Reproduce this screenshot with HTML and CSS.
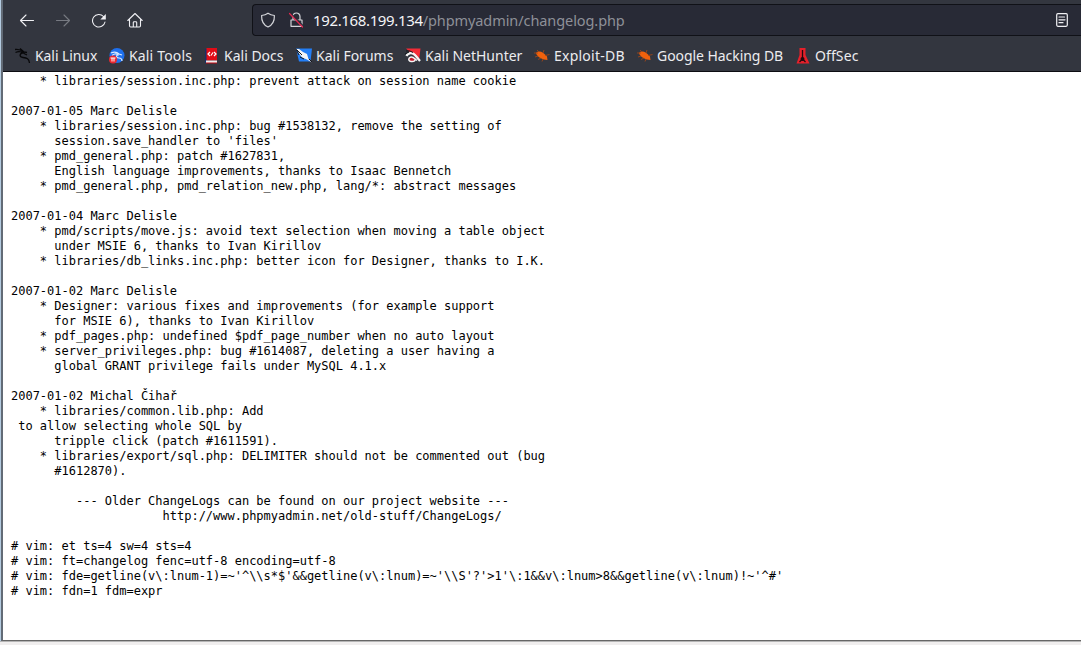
FILE: index.html
```html
<!DOCTYPE html>
<html lang="en">
<head>
<meta charset="utf-8">
<title>phpMyAdmin ChangeLog</title>
<link rel="stylesheet" href="styles.css">
</head>
<body>
<div class="frame">
<div class="window">
<header class="chrome">
  <nav class="toolbar">
    <div class="buttons">
      <svg class="nav-icon" viewBox="0 0 16 16"><path d="M14.500 8.500H1.500M7 3 1.500 8.500 7 14"/></svg>
      <svg class="nav-icon disabled" viewBox="0 0 16 16"><path d="M1.500 8.500h13M9 3l5.500 5.500L9 14"/></svg>
      <svg class="nav-icon" viewBox="0 0 16 16"><path d="M14 10A6.300 6.300 0 1 1 12.500 4.500"/><path class="solid" d="M14.800 2v5.500H9.300z"/></svg>
      <svg class="nav-icon" viewBox="0 0 16 16"><path d="M.8 8.500 8 1.500l7.200 7M2.500 7.500v6.300q0 1.200 1.200 1.200h8.600q1.200 0 1.200-1.200V7.500M6.300 15v-4.500q0-.8.8-.8h1.800q.8 0 .8.8V15"/></svg>
    </div>
    <div class="address">
      <svg class="addr-icon" viewBox="0 0 16 16"><path d="M8 1.200C10 2.600 12 3.200 14.400 3.500 14.600 9 12.500 13 8 15 3.500 13 1.400 9 1.600 3.500 4 3.200 6 2.600 8 1.200z"/></svg>
      <svg class="addr-icon lock" viewBox="0 0 16 16"><path d="M5 8V4.500a3.500 3.500 0 0 1 7 0V8M3 8h11v6.300H3z"/><path class="cover" d="M2.500 1 16 14.500"/><path class="slash" d="M1.500 1.500 14.500 15"/></svg>
      <span class="url">192.168.199.134<span class="path">/phpmyadmin/changelog.php</span></span>
      <svg class="addr-icon reader" viewBox="0 0 16 16"><rect x="2.700" y="1.700" width="10.600" height="12.600" rx="1.200"/><path d="M5 5h5.500M5 7.800h6M5 10.700h4"/></svg>
    </div>
  </nav>
  <nav class="bookmarks">
    <span class="bm linux"><svg viewBox="0 0 16 16"><path class="dragon" d="M0 1.500C4 .5 6 2 9 4M.5 4.500C5 2.500 7 4 9.500 5.500M5 .5l4 3.500 3 .5M9 4.500C4 5 4 9 8 9.500s6 1 6.500 5.500M9 5.500l3 1.500"/></svg>Kali Linux</span>
    <span class="bm tools"><svg viewBox="0 0 16 16"><circle cx="8" cy="7.500" r="7.500" fill="#1e70ee"/><path d="M2 5c4-2 6-1 8 1l3 1M3 7.500C6 5 8 6 9 7c-3 1-1 3 1 3s3 1 3 3" fill="none" stroke="#d7e8ff" stroke-width="1.200"/><circle cx="4" cy="11.500" r="4" fill="#e92830"/><path d="M1.500 10h5M3 10v3.500M5 10v3.500" stroke="#fff"/></svg>Kali Tools</span>
    <span class="bm docs"><svg viewBox="0 0 16 16"><path d="M1 1h2v14H1z" fill="#17306b"/><path d="M2.500 0H13v12.500H2.500z" fill="#e00c17"/><path d="M2 12.500h11V15H2z" fill="#eee"/><path d="M2 14.500h11v1H2z" fill="#c70812"/><path d="M6 4 4 6l2 2M10 4l2 2-2 2M9 4.500l-2 3" stroke="#fff" stroke-width="1.200" fill="none"/></svg>Kali Docs</span>
    <span class="bm forums"><svg viewBox="0 0 16 16"><path d="M0 .5h16l-1.500 13H3z" fill="#237ef5"/><path d="M0 1h3l4 3 4 2 1.500 5 3.500 3.500-5-3-5-2-3-4z" fill="#f5f5f5"/><path d="M1 2l5 5M4 9l4 2M0 1l3 6M13 11l3 3" stroke="#15171d" stroke-width="1"/></svg>Kali Forums</span>
    <span class="bm nethunter"><svg viewBox="0 0 16 16"><path d="M1 .5h14.500l-1.500 12L8 7z" fill="#f42b36"/><path d="M1.500 8C3 4.500 8 4 10.500 7.500L15 13" fill="none" stroke="#f5f5f5" stroke-width="2.200"/><path d="M12 12.500 8 9.500C4 7.500 2 13 6 13.500c3 .5 5-1 4-3" fill="#c71929" stroke="#f5f5f5" stroke-width="1.500"/><path d="M1 3q4-1 7 1.500M0 6l4-2" stroke="#15171d" fill="none"/></svg>Kali NetHunter</span>
    <span class="bm exploit"><svg viewBox="0 0 16 16"><path d="M2 5C5 2 9 4 13 8.500l.5 3.500C8.500 12 3 9 2 5z" fill="#f1610c"/><path d="M0 5h4M5 4 3 2M9 5l1-3M11 7.500l4.500-1M4 8l-3 1M7 10l-3 1.500M9 11l-1 2.500" stroke="#a94613" stroke-width=".8"/></svg>Exploit-DB</span>
    <span class="bm google"><svg viewBox="0 0 16 16"><path d="M2 5C5 2 9 4 13 8.500l.5 3.500C8.500 12 3 9 2 5z" fill="#f1610c"/><path d="M0 5h4M5 4 3 2M9 5l1-3M11 7.500l4.500-1M4 8l-3 1M7 10l-3 1.500M9 11l-1 2.500" stroke="#a94613" stroke-width=".8"/></svg>Google Hacking DB</span>
    <span class="bm offsec"><svg viewBox="0 0 16 16"><path d="M4.500 0h6v7l4 8.500h-13l3-8.500z" fill="#e5202a"/><path d="M7.500 2v11M7.500 11l-3 3M7.500 11l3 3" stroke="#24090e" stroke-width="1.300"/><circle cx="7.500" cy="11" r="2" fill="#24090e"/></svg>OffSec</span>
  </nav>
</header>
<pre class="log">    * libraries/session.inc.php: prevent attack on session name cookie

2007-01-05 Marc Delisle
    * libraries/session.inc.php: bug #1538132, remove the setting of
      session.save_handler to 'files'
    * pmd_general.php: patch #1627831,
      English language improvements, thanks to Isaac Bennetch
    * pmd_general.php, pmd_relation_new.php, lang/*: abstract messages

2007-01-04 Marc Delisle
    * pmd/scripts/move.js: avoid text selection when moving a table object
      under MSIE 6, thanks to Ivan Kirillov
    * libraries/db_links.inc.php: better icon for Designer, thanks to I.K.

2007-01-02 Marc Delisle
    * Designer: various fixes and improvements (for example support
      for MSIE 6), thanks to Ivan Kirillov
    * pdf_pages.php: undefined $pdf_page_number when no auto layout
    * server_privileges.php: bug #1614087, deleting a user having a
      global GRANT privilege fails under MySQL 4.1.x

2007-01-02 Michal Čihař
    * libraries/common.lib.php: Add
 to allow selecting whole SQL by
      tripple click (patch #1611591).
    * libraries/export/sql.php: DELIMITER should not be commented out (bug
      #1612870).

         --- Older ChangeLogs can be found on our project website ---
                     http://www.phpmyadmin.net/old-stuff/ChangeLogs/

# vim: et ts=4 sw=4 sts=4
# vim: ft=changelog fenc=utf-8 encoding=utf-8
# vim: fde=getline(v\:lnum-1)=~'^\\s*$'&amp;&amp;getline(v\:lnum)=~'\\S'?'&gt;1'\:1&amp;&amp;v\:lnum&gt;8&amp;&amp;getline(v\:lnum)!~'^#'
# vim: fdn=1 fdm=expr
</pre>
</div>
</div>
</body>
</html>
```
FILE: styles.css
```css
* { box-sizing: border-box; }
body { margin: 0; background: #f0eeee; overflow: hidden; }
.frame { height: 642px; padding-left: 1px; background: #b4cbe0; border-bottom: 1px solid #b5b5b5; }
.window { height: 641px; display: flex; flex-direction: column; border-left: 2px solid #626b76; border-bottom: 1px solid #666; background: #fff; }
.chrome { height: 72px; flex: none; background: #33363f; border-bottom: 1px solid #0c0c12; font-family: "Noto Sans", sans-serif; }
.toolbar { display: flex; height: 40px; padding-top: 4px; }
.buttons { display: flex; gap: 20px; width: 249px; padding: 8px 0 0 16px; }
.nav-icon, .addr-icon { flex: none; width: 16px; height: 16px; fill: none; stroke: #f0f0f4; stroke-width: 1.1; stroke-linecap: round; stroke-linejoin: round; }
.nav-icon .solid { fill: #f0f0f4; stroke: none; }
.nav-icon.disabled { stroke: #777a82; }
.address { display: flex; flex: 1; align-items: center; height: 32px; padding: 0 11px 0 7px; background: #282a36; border: 1px solid #101117; border-right: 0; border-radius: 4px 0 0 4px; }
.addr-icon { stroke: #d3d4d9; stroke-width: 1.2; }
.lock { margin-left: 12px; }
.lock .cover { stroke: #282a36; }
.lock .slash { stroke: #e22850; }
.url { margin-left: 9px; font-size: 15px; line-height: 20px; letter-spacing: -0.36px; color: #f4f4f6; white-space: nowrap; }
.path { font-size: 14.5px; letter-spacing: -0.08px; color: #8e9098; }
.reader { margin-left: auto; stroke: #f0f0f4; }
.bookmarks { display: flex; height: 31px; padding-left: 12px; font-size: 14px; line-height: 31px; color: #ececef; white-space: nowrap; }
.bm { display: flex; flex: none; align-items: center; gap: 4px; }
.bm svg { width: 16px; height: 16px; flex: none; }
.linux { width: 94px; letter-spacing: -0.08px; }
.tools { width: 95px; letter-spacing: 0.16px; }
.docs { width: 92px; }
.forums { width: 109px; }
.nethunter { width: 129px; }
.exploit { width: 103px; letter-spacing: 0.24px; }
.google { width: 158px; letter-spacing: -0.06px; }
.offsec { letter-spacing: 0.1px; }
.dragon { fill: none; stroke: #08080a; stroke-width: 1.3; }
.log { margin: 0; padding: 2px 0 0 8px; font: 12px/15px "DejaVu Sans Mono", monospace; letter-spacing: -0.008px; color: #000; }
```
